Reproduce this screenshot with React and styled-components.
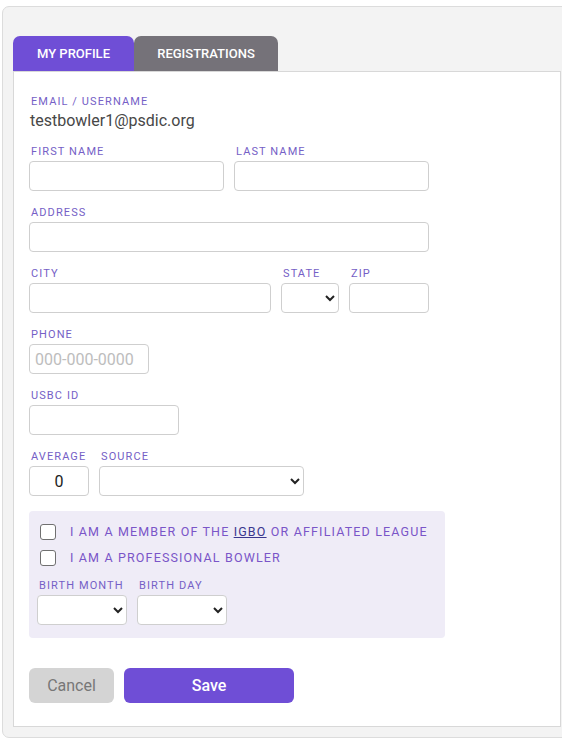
import React from "react";
import styled, { createGlobalStyle } from "styled-components";

const Global = createGlobalStyle`
  html, body { margin: 0; padding: 0; background: #fff; overflow: hidden; }
  body { font-family: Roboto, "Liberation Sans", Arial, sans-serif; }
  * { box-sizing: border-box; }
`;

const Frame = styled.div`
  margin: 6px 0 0 2px;
  width: 600px;
  background: #f3f3f3;
  border: 1px solid #dcdcdc;
  border-radius: 7px;
  padding: 29px 0 10px 10px;
`;

const Tabs = styled.div`
  display: flex;
`;

const Tab = styled.div`
  height: 35px;
  width: ${(p) => p.$w}px;
  display: flex;
  align-items: center;
  justify-content: center;
  background: ${(p) => (p.$active ? "#6f4ed6" : "#757279")};
  color: #fff;
  font-size: 13px;
  font-weight: 500;
  border-radius: 7px 7px 0 0;
`;

const Panel = styled.div`
  width: 548px;
  background: #fff;
  border: 1px solid #d8d8d8;
  padding: 23px 15px 23px 15px;
`;

const Label = styled.div`
  font-size: 11px;
  line-height: 14px;
  letter-spacing: 1.1px;
  color: #7560c6;
  padding-left: 2px;
  margin-bottom: 2px;
  white-space: nowrap;
`;

const Value = styled.div`
  font-size: 16px;
  line-height: 20px;
  color: #474747;
  padding-left: 1px;
  margin-bottom: 14px;
`;

const Row = styled.div`
  display: flex;
  gap: 10px;
  margin-bottom: 15px;
`;

const Field = styled.div`
  display: flex;
  flex-direction: column;
  width: ${(p) => p.$w}px;
`;

const Input = styled.input`
  width: 100%;
  height: 30px;
  border: 1px solid #cfcfcf;
  border-radius: 4px;
  background: #fff;
  font-family: Roboto, "Liberation Sans", Arial, sans-serif;
  font-size: 16px;
  color: #222;
  padding: 0 5px;
  text-align: ${(p) => (p.$center ? "center" : "left")};
  outline: none;
  &::placeholder { color: #bdbdbd; }
`;

const Select = styled.select`
  width: 100%;
  height: 30px;
  border: 1px solid #cfcfcf;
  border-radius: 4px;
  background: #fff;
  font-family: Roboto, "Liberation Sans", Arial, sans-serif;
  font-size: 14px;
  color: #222;
`;

const Box = styled.div`
  width: 416px;
  background: #efecf7;
  border-radius: 4px;
  padding: 13px 8px 13px 8px;
  margin-top: 1px;
`;

const CheckRow = styled.label`
  display: flex;
  align-items: center;
  gap: 14px;
  margin: 0 0 10px 3px;
  font-size: 12.5px;
  line-height: 16px;
  letter-spacing: 1.15px;
  color: #7a55c8;
  white-space: nowrap;
`;

const CheckBox = styled.span`
  width: 16px;
  height: 16px;
  border: 1px solid #707070;
  border-radius: 3px;
  background: #fff;
  flex: none;
`;

const Link = styled.a`
  color: #3b378f;
  text-decoration: underline;
`;

const BirthRow = styled.div`
  display: flex;
  gap: 10px;
  margin-top: 13px;
`;

const Buttons = styled.div`
  display: flex;
  gap: 10px;
  margin-top: 30px;
`;

const Button = styled.button`
  height: 35px;
  width: ${(p) => p.$w}px;
  border: none;
  border-radius: 6px;
  font-family: Roboto, "Liberation Sans", Arial, sans-serif;
  font-size: 16px;
  font-weight: ${(p) => (p.$primary ? 500 : 400)};
  background: ${(p) => (p.$primary ? "#6f4ed6" : "#d4d4d4")};
  color: ${(p) => (p.$primary ? "#fff" : "#777")};
`;

const Group = ({ label, w, children }) => (
  <Field $w={w}>
    <Label>{label}</Label>
    {children}
  </Field>
);

export default function App() {
  return (
    <>
      <Global />
      <Frame>
        <Tabs>
          <Tab $active $w={121}>MY PROFILE</Tab>
          <Tab $w={144}>REGISTRATIONS</Tab>
        </Tabs>
        <Panel>
          <Label>EMAIL / USERNAME</Label>
          <Value>testbowler1@psdic.org</Value>
          <Row>
            <Group label="FIRST NAME" w={195}><Input /></Group>
            <Group label="LAST NAME" w={195}><Input /></Group>
          </Row>
          <Row>
            <Group label="ADDRESS" w={400}><Input /></Group>
          </Row>
          <Row>
            <Group label="CITY" w={242}><Input /></Group>
            <Group label="STATE" w={58}><Select /></Group>
            <Group label="ZIP" w={80}><Input /></Group>
          </Row>
          <Row>
            <Group label="PHONE" w={120}><Input placeholder="000-000-0000" /></Group>
          </Row>
          <Row>
            <Group label="USBC ID" w={150}><Input /></Group>
          </Row>
          <Row>
            <Group label="AVERAGE" w={60}><Input $center defaultValue="0" /></Group>
            <Group label="SOURCE" w={205}><Select /></Group>
          </Row>
          <Box>
            <CheckRow>
              <CheckBox />
              <span>
                I AM A MEMBER OF THE <Link>IGBO</Link> OR AFFILIATED LEAGUE
              </span>
            </CheckRow>
            <CheckRow>
              <CheckBox />
              <span>I AM A PROFESSIONAL BOWLER</span>
            </CheckRow>
            <BirthRow>
              <Group label="BIRTH MONTH" w={90}><Select /></Group>
              <Group label="BIRTH DAY" w={90}><Select /></Group>
            </BirthRow>
          </Box>
          <Buttons>
            <Button $w={85}>Cancel</Button>
            <Button $primary $w={170}>Save</Button>
          </Buttons>
        </Panel>
      </Frame>
    </>
  );
}
